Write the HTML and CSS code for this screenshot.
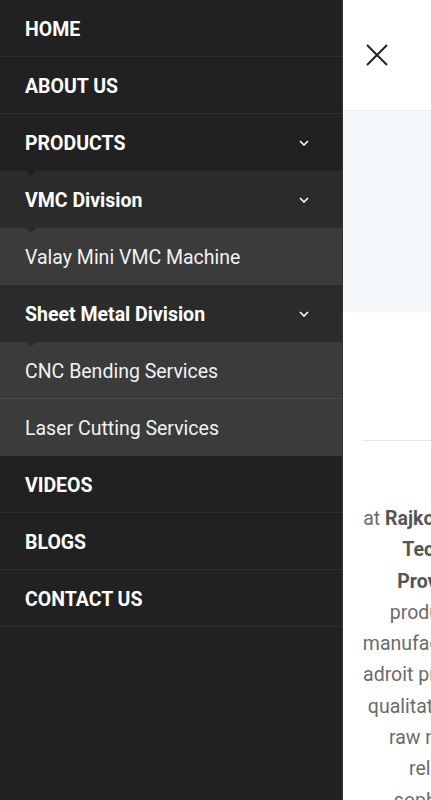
FILE: index.html
```html
<!DOCTYPE html>
<html lang="en">
<head>
<meta charset="utf-8">
<title>Menu</title>
<link rel="stylesheet" href="styles.css">
</head>
<body>
<div class="screen">
  <nav class="menu">
    <ul class="menu-list">
      <li class="item"><a class="link top">HOME</a></li>
      <li class="item"><a class="link top">ABOUT US</a></li>
      <li class="item"><a class="link top caret">PRODUCTS<span class="chev"><svg viewBox="0 0 10 6" width="10" height="6"><path d="M1 1l4 4 4-4" fill="none" stroke="#fff" stroke-width="1.6"/></svg></span></a></li>
      <li class="item lvl2"><a class="link mid caret">VMC Division<span class="chev"><svg viewBox="0 0 10 6" width="10" height="6"><path d="M1 1l4 4 4-4" fill="none" stroke="#fff" stroke-width="1.6"/></svg></span></a></li>
      <li class="item lvl3"><a class="link sub">Valay Mini VMC Machine</a></li>
      <li class="item lvl2"><a class="link mid caret">Sheet Metal Division<span class="chev"><svg viewBox="0 0 10 6" width="10" height="6"><path d="M1 1l4 4 4-4" fill="none" stroke="#fff" stroke-width="1.6"/></svg></span></a></li>
      <li class="item lvl3 lined"><a class="link sub">CNC Bending Services</a></li>
      <li class="item lvl3"><a class="link sub">Laser Cutting Services</a></li>
      <li class="item"><a class="link top">VIDEOS</a></li>
      <li class="item"><a class="link top">BLOGS</a></li>
      <li class="item"><a class="link top">CONTACT US</a></li>
    </ul>
  </nav>
  <div class="page">
    <div class="page-inner">
      <header class="header">
        <button class="close" aria-label="Close"><svg viewBox="0 0 24 24" width="24" height="24"><path d="M2 2L22 22M22 2L2 22" fill="none" stroke="#222" stroke-width="2"/></svg></button>
      </header>
      <section class="hero"></section>
      <section class="about">
        <hr class="rule">
        <p class="text">at <b>Rajkot, Gujarat. Valay CNC Machine Tools,</b><br><b>Technologies is the Manufacturer &amp;</b><br><b>Provider of VMC Machine &amp; Services</b><br>products are manufactured in our main<br>manufacturing unit under the guidance of our<br>adroit professionals using the best grade and<br>qualitative tested raw material. We order the<br>raw material from the most trusted and<br>reliable vendors of the market with<br>sophisticated technology &amp; machines.</p>
      </section>
    </div>
  </div>
</div>
</body>
</html>
```

FILE: styles.css
```css
* { box-sizing: border-box; }
html, body { margin: 0; padding: 0; }
body { font-family: Roboto, "Liberation Sans", Arial, sans-serif; background: #fff; }
.screen { display: flex; width: 431px; height: 800px; overflow: hidden; }
.menu { flex: 0 0 343px; background: #212121; border-right: 1px solid #333; height: 800px; }
.menu-list { list-style: none; margin: 0; padding: 0; }
.item { position: relative; border-bottom: 1px solid #2e2e2e; }
.link { display: flex; align-items: center; height: 56px; padding: 0 25px; color: #fff; font-size: 19.5px; text-decoration: none; padding-top: 2px; }
.top { font-weight: 700; }
.mid { font-weight: 700; }
.sub { font-weight: 400; color: #f2f2f2; }
.lvl2 { background: #2b2b2b; border-bottom-color: #2b2b2b; }
.lvl3 { background: #3b3b3b; border-bottom-color: #3b3b3b; }
.lvl3.lined { border-bottom-color: #4a4a4a; }
.item:nth-child(3) { border-bottom-color: #212121; }
.chev { margin-left: auto; margin-right: 8px; display: flex; }
.caret::after { content: ""; position: absolute; left: 26px; bottom: -6px; width: 0; height: 0; border-left: 5px solid transparent; border-right: 5px solid transparent; border-top: 5px solid #212121; z-index: 2; }
.lvl2 .caret::after { border-top-color: #2b2b2b; }
.page { flex: 1 1 auto; overflow: hidden; }
.page-inner { width: 431px; }
.header { height: 111px; border-bottom: 1px solid #eceff2; display: flex; align-items: center; padding-left: 22px; }
.close { background: none; border: 0; padding: 0; width: 24px; height: 24px; display: flex; cursor: pointer; margin-top: -1px; }
.hero { height: 201px; background: #f4f7fa; }
.about { padding: 0 19px; }
.rule { margin: 128px 0 0; border: 0; border-top: 1px solid #e6e6e6; }
.text { margin: 62px 0 0; text-align: center; font-size: 19.5px; line-height: 31.3px; color: #6b6b6b; white-space: nowrap; }
.text b { color: #555; font-weight: 700; }
```
